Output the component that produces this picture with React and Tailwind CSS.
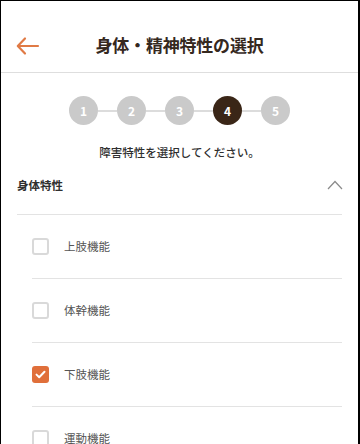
import { useState } from 'react'

const steps = [1, 2, 3, 4, 5]
const initialItems = [
  { label: '上肢機能', checked: false },
  { label: '体幹機能', checked: false },
  { label: '下肢機能', checked: true },
  { label: '運動機能', checked: false },
]

function Checkbox({ checked }) {
  if (checked) {
    return (
      <span className="w-[17px] h-[17px] rounded-[3px] bg-[#e06f3a] flex items-center justify-center shrink-0">
        <svg width="11" height="9" viewBox="0 0 11 9" fill="none">
          <path d="M1.5 4.6L4.2 7.2L9.5 1.8" stroke="white" strokeWidth="2" strokeLinecap="round" strokeLinejoin="round" />
        </svg>
      </span>
    )
  }
  return <span className="w-[17px] h-[17px] rounded-[3px] border-2 border-[#d9d9d9] bg-white shrink-0" />
}

export default function App() {
  const [items, setItems] = useState(initialItems)
  const current = 4

  const toggle = (i) =>
    setItems(items.map((it, j) => (j === i ? { ...it, checked: !it.checked } : it)))

  return (
    <div className="w-[360px] h-[444px] overflow-hidden bg-white border-t border-l border-r-2 border-black font-['Noto_Sans_CJK_JP','Noto_Sans',sans-serif]">
      {/* Header */}
      <div className="h-[72px] pt-[32px] border-b border-[#dedede] relative">
        <button className="absolute left-[15px] top-[33px]">
          <svg width="24" height="24" viewBox="0 0 24 24" fill="none">
            <path d="M22 12H2M9 4.5L1.8 12L9 19.5" stroke="#e07a45" strokeWidth="2.2" strokeLinecap="round" strokeLinejoin="round" />
          </svg>
        </button>
        <div className="h-[24px] flex items-center justify-center">
          <h1 className="text-[17px] font-bold text-[#35281e] tracking-[-0.2px]">身体・精神特性の選択</h1>
        </div>
      </div>

      {/* Steps */}
      <div className="mt-[23px] flex items-center justify-center">
        {steps.map((s, i) => (
          <div key={s} className="flex items-center">
            {i > 0 && <div className="w-[19px] h-[2px] bg-[#dcdcdc]" />}
            <div
              className={`w-[29px] h-[29px] rounded-full flex items-center justify-center text-[12px] font-bold text-white ${
                s === current ? 'bg-[#3a2617]' : 'bg-[#cacaca]'
              }`}
            >
              {s}
            </div>
          </div>
        ))}
      </div>

      <p className="mt-[19px] text-center text-[11.5px] leading-[16px] font-medium text-[#2f2f2f]">
        障害特性を選択してください。
      </p>

      {/* Section */}
      <div className="mx-4 pt-[17px] pb-[21px] border-b border-[#e3e3e3] flex items-center justify-between">
        <span className="text-[11.5px] leading-[16px] font-bold text-[#2f2f2f]">身体特性</span>
        <svg width="16" height="10" viewBox="0 0 16 10" fill="none" className="mr-[-1px]">
          <path d="M1 9L8 1.5L15 9" stroke="#8a8a8a" strokeWidth="1.2" />
        </svg>
      </div>

      <div className="pl-[31px] pr-4">
        {items.map((it, i) => (
          <label
            key={it.label}
            onClick={() => toggle(i)}
            className="h-[64px] border-b border-[#e3e3e3] flex items-center gap-[15px] cursor-pointer"
          >
            <Checkbox checked={it.checked} />
            <span className="text-[11.5px] text-[#555]">{it.label}</span>
          </label>
        ))}
      </div>
    </div>
  )
}
